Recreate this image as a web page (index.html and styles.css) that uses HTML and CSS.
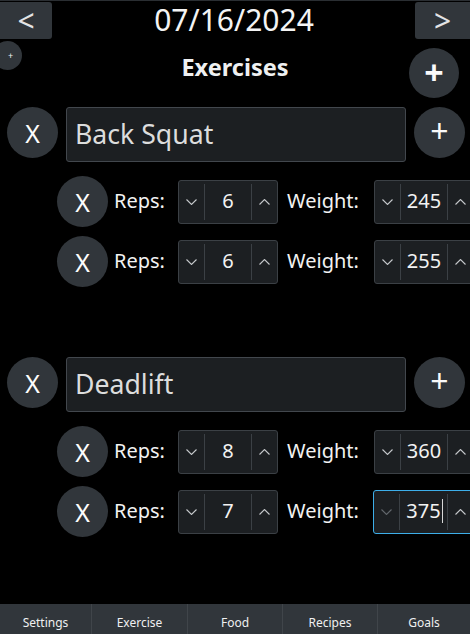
FILE: index.html
```html
<!DOCTYPE html>
<html>
<head>
<meta charset="utf-8">
<link rel="stylesheet" href="styles.css">
</head>
<body>
<div class="app">
  <div class="topbar">
    <button class="navbtn prev">&lt;</button>
    <div class="date">07/16/2024</div>
    <button class="navbtn next">&gt;</button>
  </div>
  <div class="titlebar">
    <button class="circle tiny">+</button>
    <div class="title">Exercises</div>
    <button class="circle big plus-bold">+</button>
  </div>

  <div class="exercises">
    <div class="exercise">
      <div class="ex-row">
        <button class="circle x">X</button>
        <div class="name-input">Back Squat</div>
        <button class="circle addset">+</button>
      </div>
      <div class="set-row">
        <button class="circle x">X</button>
        <span class="label reps">Reps:</span>
        <div class="spin">
          <span class="sbtn down"><svg width="11" height="6" viewBox="0 0 11 6"><polyline points="0.5,0.5 5.5,5.5 10.5,0.5"/></svg></span>
          <span class="val">6</span>
          <span class="sbtn up"><svg width="11" height="6" viewBox="0 0 11 6"><polyline points="0.5,5.5 5.5,0.5 10.5,5.5"/></svg></span>
        </div>
        <span class="label weight">Weight:</span>
        <div class="spin">
          <span class="sbtn down"><svg width="11" height="6" viewBox="0 0 11 6"><polyline points="0.5,0.5 5.5,5.5 10.5,0.5"/></svg></span>
          <span class="val">245</span>
          <span class="sbtn up"><svg width="11" height="6" viewBox="0 0 11 6"><polyline points="0.5,5.5 5.5,0.5 10.5,5.5"/></svg></span>
        </div>
      </div>
      <div class="set-row">
        <button class="circle x">X</button>
        <span class="label reps">Reps:</span>
        <div class="spin">
          <span class="sbtn down"><svg width="11" height="6" viewBox="0 0 11 6"><polyline points="0.5,0.5 5.5,5.5 10.5,0.5"/></svg></span>
          <span class="val">6</span>
          <span class="sbtn up"><svg width="11" height="6" viewBox="0 0 11 6"><polyline points="0.5,5.5 5.5,0.5 10.5,5.5"/></svg></span>
        </div>
        <span class="label weight">Weight:</span>
        <div class="spin">
          <span class="sbtn down"><svg width="11" height="6" viewBox="0 0 11 6"><polyline points="0.5,0.5 5.5,5.5 10.5,0.5"/></svg></span>
          <span class="val">255</span>
          <span class="sbtn up"><svg width="11" height="6" viewBox="0 0 11 6"><polyline points="0.5,5.5 5.5,0.5 10.5,5.5"/></svg></span>
        </div>
      </div>
    </div>

    <div class="exercise">
      <div class="ex-row">
        <button class="circle x">X</button>
        <div class="name-input">Deadlift</div>
        <button class="circle addset">+</button>
      </div>
      <div class="set-row">
        <button class="circle x">X</button>
        <span class="label reps">Reps:</span>
        <div class="spin">
          <span class="sbtn down"><svg width="11" height="6" viewBox="0 0 11 6"><polyline points="0.5,0.5 5.5,5.5 10.5,0.5"/></svg></span>
          <span class="val">8</span>
          <span class="sbtn up"><svg width="11" height="6" viewBox="0 0 11 6"><polyline points="0.5,5.5 5.5,0.5 10.5,5.5"/></svg></span>
        </div>
        <span class="label weight">Weight:</span>
        <div class="spin">
          <span class="sbtn down"><svg width="11" height="6" viewBox="0 0 11 6"><polyline points="0.5,0.5 5.5,5.5 10.5,0.5"/></svg></span>
          <span class="val">360</span>
          <span class="sbtn up"><svg width="11" height="6" viewBox="0 0 11 6"><polyline points="0.5,5.5 5.5,0.5 10.5,5.5"/></svg></span>
        </div>
      </div>
      <div class="set-row">
        <button class="circle x">X</button>
        <span class="label reps">Reps:</span>
        <div class="spin">
          <span class="sbtn down"><svg width="11" height="6" viewBox="0 0 11 6"><polyline points="0.5,0.5 5.5,5.5 10.5,0.5"/></svg></span>
          <span class="val">7</span>
          <span class="sbtn up"><svg width="11" height="6" viewBox="0 0 11 6"><polyline points="0.5,5.5 5.5,0.5 10.5,5.5"/></svg></span>
        </div>
        <span class="label weight">Weight:</span>
        <div class="spin focused">
          <span class="sbtn down dim"><svg width="11" height="6" viewBox="0 0 11 6"><polyline points="0.5,0.5 5.5,5.5 10.5,0.5"/></svg></span>
          <span class="val">375<span class="caret"></span></span>
          <span class="sbtn up"><svg width="11" height="6" viewBox="0 0 11 6"><polyline points="0.5,5.5 5.5,0.5 10.5,5.5"/></svg></span>
        </div>
      </div>
    </div>
  </div>

  <nav class="tabbar">
    <div class="tab">Settings</div>
    <div class="tab">Exercise</div>
    <div class="tab">Food</div>
    <div class="tab">Recipes</div>
    <div class="tab">Goals</div>
  </nav>
</div>
</body>
</html>
```
FILE: styles.css
```css
* { box-sizing: border-box; }
html, body {
  margin: 0;
  padding: 0;
  background: #000;
}
body {
  width: 470px;
  height: 634px;
  overflow: hidden;
  font-family: "Noto Sans", "DejaVu Sans", sans-serif;
  color: #eff0f1;
}
button {
  font-family: inherit;
  border: none;
  padding: 0;
  margin: 0;
  color: #eff0f1;
  cursor: pointer;
}
.app {
  display: flex;
  flex-direction: column;
  height: 634px;
}
.topbar {
  display: flex;
  align-items: center;
  justify-content: space-between;
  height: 39px;
  padding-top: 1px;
  border-top: 1px solid #2a2e32;
}
.navbtn {
  height: 37px;
  background: #31363b;
  font-size: 30px;
  line-height: 37px;
  color: #e3e4e5;
}
.navbtn.prev { width: 52px; border-radius: 0 3px 3px 0; margin-top: -1px; }
.navbtn.next { width: 55px; border-radius: 3px 0 0 3px; margin-top: -1px; }
.date {
  font-size: 30px;
  line-height: 37px;
  color: #f4f4f4;
  margin-left: 1px;
  margin-top: -2px;
}
.titlebar {
  display: grid;
  grid-template-columns: 1fr auto 1fr;
  height: 60px;
}
.circle {
  border-radius: 50%;
  background: #31363b;
  display: flex;
  align-items: center;
  justify-content: center;
  flex: none;
}
.circle.tiny {
  width: 29px;
  height: 29px;
  margin-left: -7px;
  margin-top: 2px;
  font-size: 9px;
  padding-left: 6px;
  justify-self: start;
  align-self: start;
}
.title {
  font-weight: bold;
  font-size: 23.5px;
  line-height: 30px;
  margin-top: 13px;
  align-self: start;
}
.circle.big {
  width: 50px;
  height: 50px;
  justify-self: end;
  align-self: start;
  margin-top: 9px;
  margin-right: 11px;
}
.plus-bold {
  font-size: 34px;
  font-weight: bold;
  line-height: 1;
  padding-bottom: 3px;
  color: #fafafa;
}
.exercises {
  display: flex;
  flex-direction: column;
  gap: 70px;
  margin-top: 8px;
}
.exercise {
  display: flex;
  flex-direction: column;
}
.ex-row {
  display: flex;
  align-items: flex-start;
  height: 55px;
  padding-left: 7px;
  gap: 8px;
}
.circle.x {
  width: 51px;
  height: 51px;
  font-size: 25px;
  line-height: 1;
  padding-top: 2px;
  color: #fdfdfd;
}
.name-input {
  width: 340px;
  height: 55px;
  background: #1c1f22;
  border: 1px solid #42474d;
  border-radius: 3px;
  font-size: 26.67px;
  line-height: 52px;
  padding-left: 8px;
  color: #dcdddd;
}
.circle.addset {
  width: 51px;
  height: 51px;
  font-size: 32px;
  line-height: 1;
  padding-bottom: 3px;
  color: #fafafa;
}
.set-row {
  display: flex;
  align-items: center;
  height: 51px;
  padding-left: 57px;
  margin-top: 9px;
}
.ex-row + .set-row { margin-top: 14px; }
.label {
  font-size: 20px;
  line-height: 1;
  color: #f2f2f2;
  flex: none;
  margin-top: -2px;
}
.label.reps { width: 70px; padding-left: 6px; }
.label.weight { width: 96px; padding-left: 9px; }
.spin {
  flex: none;
  display: flex;
  align-items: center;
  width: 100px;
  height: 44px;
  background: #1c1f22;
  border: 1px solid #3b4045;
  border-radius: 3px;
}
.spin.focused {
  border-color: #3daee9;
  margin-left: -1px;
  width: 101px;
}
.sbtn {
  width: 26px;
  height: 36px;
  display: flex;
  align-items: center;
  justify-content: center;
  flex: none;
}
.sbtn svg {
  display: block;
  fill: none;
  stroke: #c5c8cb;
  stroke-width: 1.1;
}
.sbtn.dim svg { stroke: #62676c; }
.sbtn.down { border-right: 1px solid #3b4045; }
.sbtn.up { border-left: 1px solid #3b4045; }
.val {
  flex: 1;
  text-align: center;
  font-size: 20px;
  line-height: 1;
  color: #f2f2f2;
  position: relative;
  margin-top: -1px;
}
.caret {
  position: absolute;
  width: 1px;
  height: 24px;
  background: #d8d8d8;
  top: -2px;
  margin-left: 1px;
}
.tabbar {
  margin-top: auto;
  height: 30px;
  background: #31363b;
  display: grid;
  grid-template-columns: 91px 96px 95px 95px 1fr;
  overflow: hidden;
}
.tab {
  font-size: 12px;
  line-height: 30px;
  text-align: center;
  color: #eff0f1;
  border-left: 1px solid #40454a;
  padding-top: 4px;
  overflow: hidden;
}
.tab:first-child { border-left: none; }
```
